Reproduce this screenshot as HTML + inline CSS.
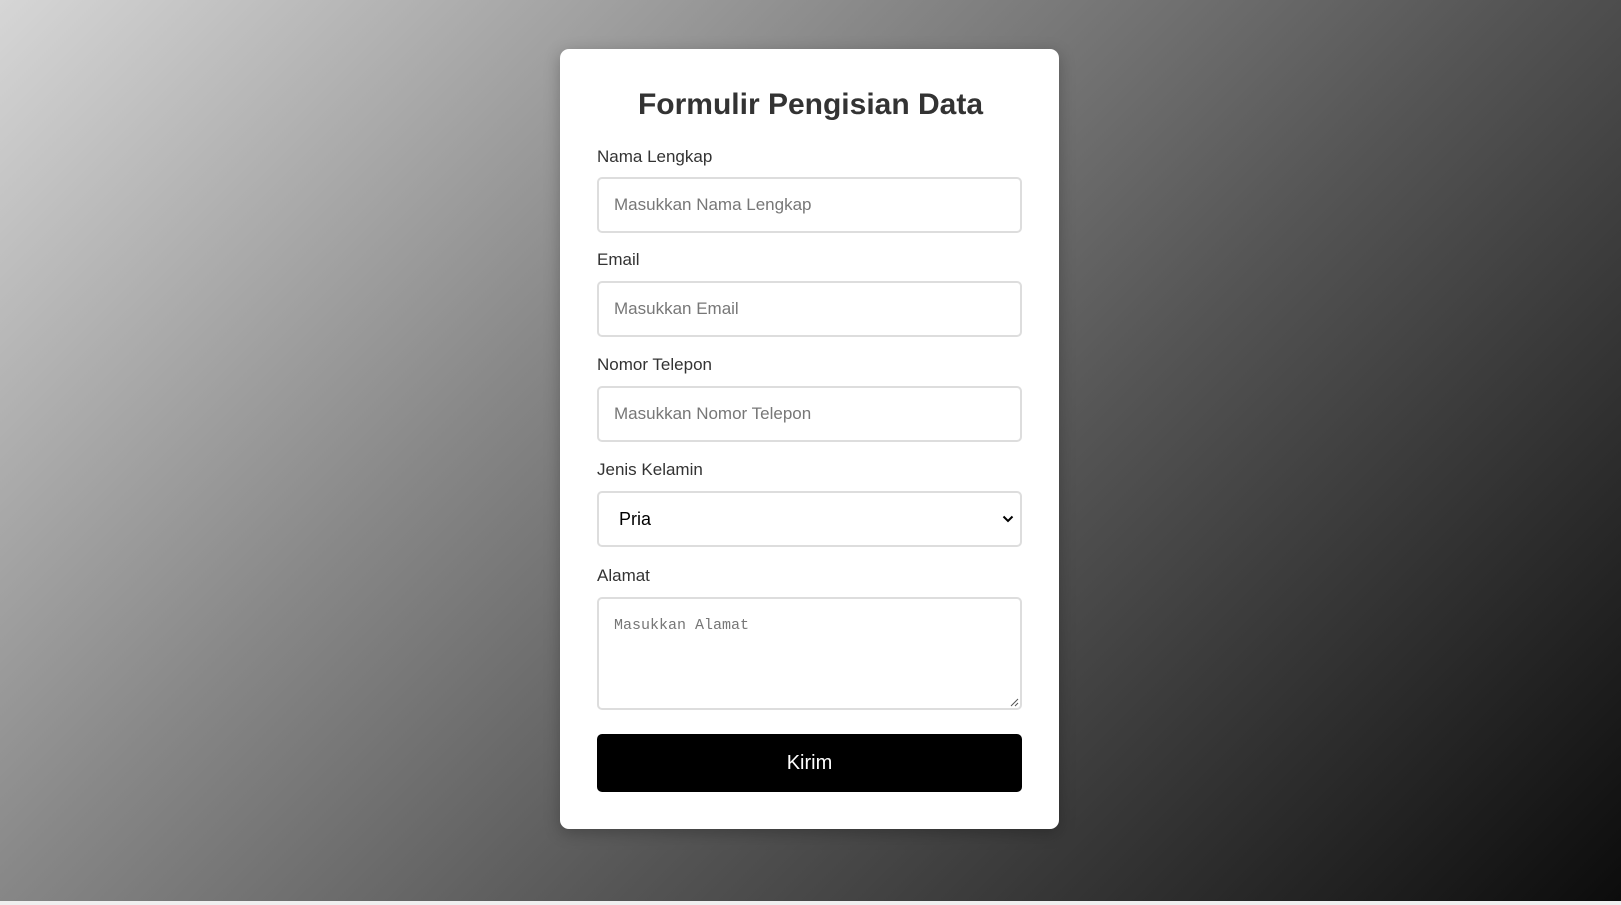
<!DOCTYPE html>
<html><head><meta charset="utf-8"><style>
html,body{margin:0;padding:0;width:1621px;height:905px;overflow:hidden;background:#efefef;font-family:"Liberation Sans",Arial,sans-serif}
.bg{position:absolute;left:0;top:0;width:1621px;height:901px;background:linear-gradient(135deg,#d6d6d6 0%,#888 35%,#555 60%,#0c0c0c 100%)}
.card{position:absolute;left:560px;top:49px;width:499px;height:780px;background:#fff;border-radius:9px;box-shadow:0 4px 16px rgba(0,0,0,.25)}
h1{position:absolute;left:0;right:0;top:88px;margin:0;text-align:center;font-size:30px;font-weight:bold;color:#333;line-height:34px}
.lbl{position:absolute;left:597px;font-size:17px;color:#333;line-height:20px}
.in{position:absolute;left:597px;width:421px;height:52px;border:2px solid #ddd;border-radius:5px;box-sizing:content-box;background:#fff;font-size:17px;color:#777;line-height:52px;text-indent:15px}
.btn{position:absolute;left:597px;top:734px;width:425px;height:58px;background:#000;border-radius:5px;color:#fff;font-size:20px;text-align:center;line-height:58px}
</style></head><body>
<div class="bg"></div>
<div class="card"></div>
<h1>Formulir Pengisian Data</h1>
<div class="lbl" style="top:147px">Nama Lengkap</div>
<div class="in" style="top:177px">Masukkan Nama Lengkap</div>
<div class="lbl" style="top:250px">Email</div>
<div class="in" style="top:281px">Masukkan Email</div>
<div class="lbl" style="top:355px">Nomor Telepon</div>
<div class="in" style="top:386px">Masukkan Nomor Telepon</div>
<div class="lbl" style="top:460px">Jenis Kelamin</div>
<div class="in" style="top:491px;color:#000;font-size:18px;text-indent:20px">Pria
<svg style="position:absolute;right:6px;top:21px" width="12" height="10" viewBox="0 0 12 10"><path d="M1.5 2.5 L6 7 L10.5 2.5" fill="none" stroke="#000" stroke-width="2"/></svg></div>
<div class="lbl" style="top:566px">Alamat</div>
<div class="in" style="top:597px;height:109px;line-height:20px;font-family:'Liberation Mono',monospace;font-size:15px;text-indent:0;padding:0"><div style="padding:17px 0 0 15px">Masukkan Alamat</div>
<svg style="position:absolute;right:1px;bottom:1px" width="10" height="10" viewBox="0 0 10 10"><path d="M9 2 L2 9 M9 6 L6 9" stroke="#555" stroke-width="1"/></svg></div>
<div class="btn">Kirim</div>
</body></html>
